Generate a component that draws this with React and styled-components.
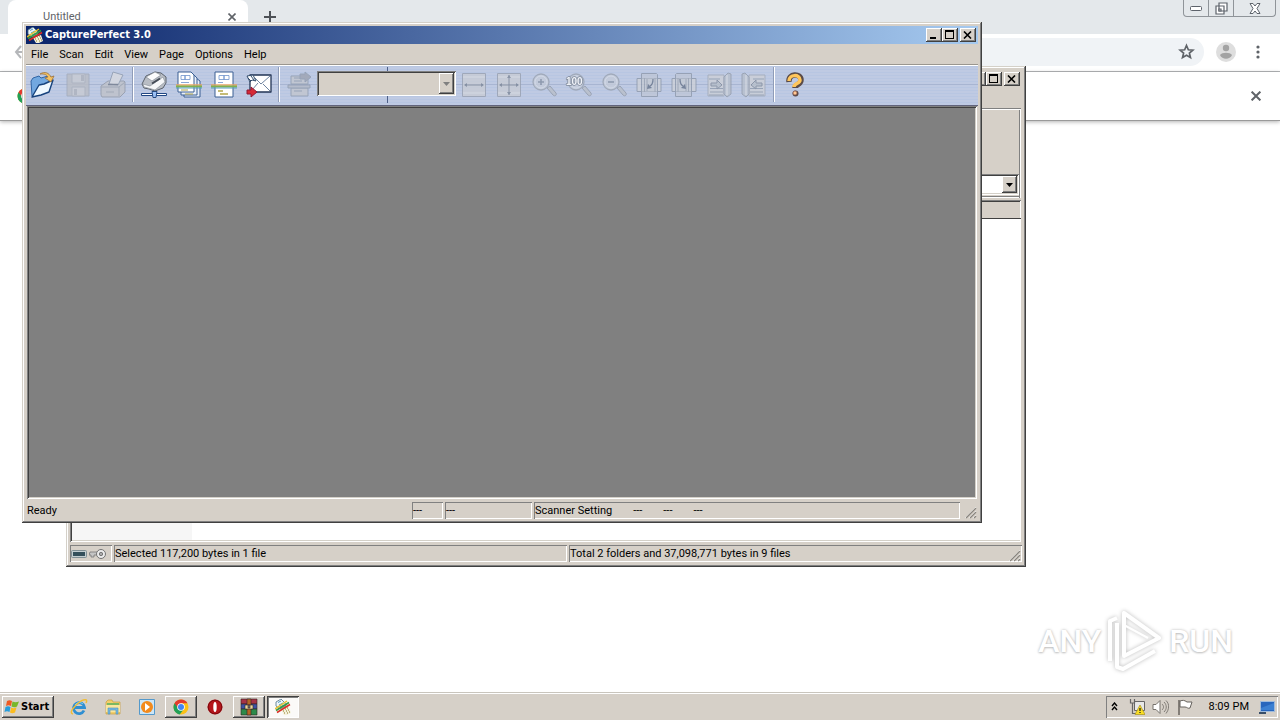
import React from "react";
import styled, { createGlobalStyle, css } from "styled-components";

const FACE = "#d6d0c8";
const uiFont = `Roboto, "DejaVu Sans Condensed", sans-serif`;

const GlobalStyle = createGlobalStyle`
  * { box-sizing: border-box; }
  body { margin: 0; background: #fff; overflow: hidden; font-family: ${uiFont}; font-size: 11px; line-height: 14px; color: #000; }
  button, input, select { font: inherit; color: inherit; margin: 0; padding: 0; border: 0; border-radius: 0; background: none; }
  svg { display: block; flex: none; }
`;

const raised = css`
  background: ${FACE};
  box-shadow: inset -1px -1px #404040, inset 1px 1px #fff, inset -2px -2px #808080;
`;
const sunken = css`
  box-shadow: inset 1px 1px #808080, inset -1px -1px #fff;
`;
const well = css`
  box-shadow: inset 1px 1px #808080, inset -1px -1px #fff, inset 2px 2px #404040, inset -2px -2px #d4d0c8;
`;

const Desktop = styled.div`
  position: relative;
  display: flex;
  flex-direction: column;
  min-height: 100vh;
  overflow: hidden;
`;

/* ---------- browser ---------- */
const Browser = styled.main`
  flex: 1;
  display: flex;
  flex-direction: column;
  background: #fff;
`;
const TabStrip = styled.div`
  display: flex;
  height: 34px;
  padding-left: 8px;
  background: #e4e8eb;
`;
const Tab = styled.div`
  display: flex;
  align-items: center;
  justify-content: space-between;
  width: 240px;
  padding: 0 11px 0 35px;
  background: #fff;
  border-radius: 8px 8px 0 0;
  color: #5f6368;
`;
const PlainButton = styled.button`
  display: flex;
  align-items: center;
  justify-content: center;
  width: ${(p) => p.$w || 24}px;
`;
const NewTab = styled(PlainButton)`
  margin-left: 10px;
`;
const CaptionGroup = styled.div`
  display: flex;
  height: 17px;
  margin: 0 4px 0 auto;
  border: 1px solid #8f9499;
  border-top: 0;
  border-radius: 0 0 4px 4px;
  button + button { border-left: 1px solid #8f9499; }
`;
const AddressRow = styled.div`
  display: flex;
  align-items: center;
  height: 38px;
  padding: 0 2px 2px 13px;
  border-bottom: 1px solid #b4b6b8;
`;
const Omnibox = styled.div`
  flex: 1;
  display: flex;
  align-items: center;
  height: 28px;
  margin: 0 10px 0 70px;
  padding: 0 6px 0 14px;
  border-radius: 14px;
  background: #f0f3f6;
  input { flex: 1; min-width: 0; }
`;
const InfoBar = styled.div`
  display: flex;
  align-items: center;
  justify-content: space-between;
  height: 49px;
  padding: 0 12px 0 17px;
  border-bottom: 1px solid #9a9a9a;
  box-shadow: 0 1px 4px rgba(0, 0, 0, 0.3);
`;

/* ---------- classic windows ---------- */
const Window = styled.section`
  position: absolute;
  left: ${(p) => p.$x}px;
  top: ${(p) => p.$y}px;
  display: flex;
  flex-direction: column;
  width: 960px;
  height: 501px;
  padding: 4px;
  background: ${FACE};
  box-shadow: inset -1px -1px #404040, inset 1px 1px #d4d0c8, inset -2px -2px #808080, inset 2px 2px #fff;
`;
const TitleBar = styled.header`
  display: flex;
  align-items: center;
  height: 18px;
  margin-bottom: 1px;
  padding: 0 2px 0 1px;
  gap: 2px;
  background: ${(p) => (p.$active ? "linear-gradient(90deg, #0a246a, #a6caf0)" : FACE)};
`;
const Title = styled.h1`
  flex: 1;
  margin: 0;
  color: #fff;
  font-family: "DejaVu Sans Condensed", "DejaVu Sans", sans-serif;
  font-size: 11px;
  line-height: 18px;
  font-weight: 700;
`;
const CaptionPair = styled.div`
  display: flex;
`;
const Caption = styled.button`
  display: flex;
  align-items: center;
  justify-content: center;
  width: 16px;
  height: 14px;
  ${raised}
`;
const MenuBar = styled.nav`
  display: flex;
  height: 20px;
  padding-left: 5px;
  gap: 11px;
  border-bottom: 1px solid #9a968f;
`;
const MenuItem = styled.button`
  line-height: 18px;
`;
const ToolBar = styled.div`
  display: flex;
  align-items: center;
  height: 41px;
  padding-bottom: 2px;
  border-top: 1px solid #fff;
  border-bottom: 1px solid #62647c;
  background:
    linear-gradient(#a8b5d2, #a8b5d2) 0 18px / 100% 1px no-repeat,
    repeating-linear-gradient(180deg, #b8c6e2 0 1px, #bfcae3 1px 3px);
`;
const ToolButton = styled.button`
  display: flex;
  align-items: center;
  justify-content: center;
  width: 35px;
  height: 35px;
  &:first-child { width: 34px; }
`;
const ToolSeparator = styled.span`
  width: 2px;
  height: 35px;
  margin: 0 2px;
  background: linear-gradient(90deg, #8f9cb8 50%, #fff 50%);
`;
const ComboSlot = styled.div`
  display: flex;
  align-items: center;
  height: 36px;
  padding-bottom: 2px;
  background: linear-gradient(#4d5f88, #4d5f88) 70px 0 / 1px 100% no-repeat;
`;
const Combo = styled.div`
  display: flex;
  align-items: stretch;
  width: ${(p) => p.$w}px;
  height: ${(p) => p.$h}px;
  padding: 2px;
  background: ${(p) => p.$bg};
  ${well}
  select { flex: 1; min-width: 0; appearance: none; opacity: 1; }
`;
const ComboArrow = styled.span`
  display: flex;
  align-items: center;
  justify-content: center;
  width: 15px;
  ${raised}
`;
const Workspace = styled.div`
  flex: 1;
  margin: 0 1px 1px;
  background: #808080;
  box-shadow: inset 1px 1px #808080, inset -1px -1px #fff, inset 2px 2px #404040, inset -2px -2px #d4d0c8;
`;
const StatusBar = styled.footer`
  display: flex;
  align-items: stretch;
  height: 19px;
  padding: ${(p) => (p.$raise ? "1px 0 1px" : "2px 0 0")};
  gap: 2px;
`;
const StatusPane = styled.div`
  display: flex;
  align-items: center;
  gap: ${(p) => p.$gap || 0}px;
  padding: 1px 2px 0 1px;
  flex: ${(p) => (p.$w ? `0 0 ${p.$w}px` : "1")};
  line-height: 16px;
  ${(p) => !p.$flat && sunken}
`;
const GripSlot = styled.div`
  display: flex;
  align-items: flex-end;
  margin-left: ${(p) => p.$pull || 0}px;
`;
const ArchiveTools = styled.div`
  display: flex;
  align-items: flex-end;
  justify-content: flex-end;
  height: 90px;
  margin: 19px 1px 2px 0;
  padding: 0 2px 3px;
  box-shadow: inset 0 1px #808080, inset 0 2px #fff, inset -1px 0 #fff, inset -2px 0 #808080, inset 0 -1px #fff, inset 0 -2px #808080;
`;
const ListFrame = styled.div`
  flex: 1;
  display: flex;
  flex-direction: column;
  margin: 0 1px 2px 0;
  padding: 2px 0 2px 2px;
  ${well}
`;
const ListHeader = styled.div`
  height: 17px;
  border-bottom: 1px solid #404040;
`;
const ListBody = styled.div`
  flex: 1;
  background: linear-gradient(90deg, #f6f6f6 120px, #fff 120px);
`;

/* ---------- taskbar ---------- */
const TaskBar = styled.footer`
  display: flex;
  align-items: center;
  height: 28px;
  padding: 1px 2px 0;
  background: ${FACE};
  box-shadow: inset 0 1px #c9c5bd, inset 0 2px #fff;
`;
const StartButton = styled.button`
  display: flex;
  align-items: center;
  width: 52px;
  height: 22px;
  padding-left: 2px;
  gap: 1px;
  font-family: "DejaVu Sans Condensed", "DejaVu Sans", sans-serif;
  font-weight: 700;
  ${raised}
`;
const Launchers = styled.div`
  display: flex;
  align-items: center;
  margin-left: 8px;
`;
const Launcher = styled.button`
  display: flex;
  align-items: center;
  justify-content: center;
  width: 34px;
  height: 22px;
`;
const TaskButton = styled(Launcher)`
  width: 32px;
  margin: 0 1px;
  ${raised}
  ${(p) => p.$pressed && css`background: #fbfaf8; box-shadow: inset 1px 1px #404040, inset -1px -1px #fff, inset 2px 2px #808080;`}
`;
const Tray = styled.div`
  display: flex;
  align-items: center;
  height: 22px;
  margin-left: auto;
  padding: 0 2px 0 5px;
  ${sunken}
`;
const TrayButton = styled(PlainButton)`
  height: 20px;
`;
const Clock = styled.time`
  padding: 0 10px 0 6px;
`;

const Watermark = styled.div`
  position: absolute;
  right: 47px;
  bottom: 48px;
  display: flex;
  align-items: center;
  gap: 5px;
  color: #fff;
  font-family: Roboto, sans-serif;
  font-size: 32px;
  font-weight: 500;
  line-height: 62px;
  text-shadow: 0 0 3px #bbb, 0 1px 2px #ccc;
  svg { filter: drop-shadow(0 0 2px #bbb); }
`;

/* ---------- drawings ---------- */
const Cross = ({ s = 8, c = "#5f6368", w = 2 }) => (
  <svg width={s} height={s} viewBox="0 0 8 8" stroke={c} strokeWidth={w} fill="none"><path d="M.5 .5l7 7M7.5 .5l-7 7" /></svg>
);
const MinGlyph = () => <svg width="12" height="10" viewBox="0 0 12 10"><path d="M2 7h6v2H2z" /></svg>;
const MaxGlyph = () => <svg width="10" height="10" viewBox="0 0 10 10" shapeRendering="crispEdges"><path d="M0 0h9v9H0zM1 2v6h7V2z" fillRule="evenodd" /></svg>;
const CloseGlyph = () => <svg width="10" height="8" viewBox="0 0 10 8" fill="none" stroke="#000" strokeWidth="1.6"><path d="M1 .5l7 7M8 .5l-7 7" /></svg>;
const DownGlyph = ({ c = "#000" }) => <svg width="7" height="4" viewBox="0 0 7 4"><path d="M0 0h7L3.500 4z" fill={c} /></svg>;
const Grip = () => (
  <svg width="13" height="13" viewBox="0 0 13 13" fill="none">
    <path d="M0 12L11 1M4 12l7-7M8 12l3-3" stroke="#fff" />
    <path d="M1 12L11 2M5 12l6-6M9 12l2-2" stroke="#8a867f" strokeWidth="1.400" />
  </svg>
);
const AppLogo = ({ s = 16 }) => (
  <svg width={s} height={s} viewBox="0 0 16 16">
    <path d="M1 3l5-3 4 4 1 3-6 3-4-3z" fill="#eef6fa" stroke="#4e7187" strokeWidth=".8" />
    <path d="M3 3.500l3-1.500M4 6l4-2M5 8l4-2" stroke="#4e98c0" />
    <path d="M6 11l8-3 2 6-4 2H9z" fill="#f4f1dc" />
    <path d="M0 10l12-8" stroke="#e9c12c" strokeWidth="1.500" />
    <path d="M1 11.500l13-8" stroke="#389a42" strokeWidth="1.700" />
    <path d="M2 13.500l13-8" stroke="#db2f24" strokeWidth="1.500" />
    <path d="M8 12h1M10 10h1M12 9h1M11 12h1M13 11h1M9 14h1M12 14h1M14 13h1" stroke="#8b7a26" strokeWidth="1.200" />
  </svg>
);
const Tool = ({ children, off }) => (
  <svg width="28" height="28" viewBox="0 0 28 28" fill="none" stroke={off ? "#8e9aad" : "#3a5f93"} strokeWidth="1" strokeLinejoin="round" opacity={off ? 0.8 : 1}>{children}</svg>
);
const OpenIcon = () => (
  <Tool>
    <path d="M3 25L2 10l2-3 6-2 2 2 7-2 3 1v5z" fill="#72a8e0" stroke="#3165a5" />
    <path d="M3 26l7-12 5-1 9-4-4 12-8 3z" fill="#eef8ff" stroke="#16427d" strokeWidth="1.400" />
    <path d="M11 3c5-3 9-1 11 3l3-1-3 6-6-4 3-1c-2-3-4-3-8-3z" fill="#f5c263" stroke="#9a713e" strokeWidth=".8" />
  </Tool>
);
const SaveIcon = () => (
  <Tool off>
    <path d="M3 3h22v22H3z" fill="#babdc5" stroke="#a1a9b8" />
    <path d="M8 3h13v9H8zM8 16h13v9H8z" fill="#c8cbd2" stroke="#a9afba" />
    <path d="M17 4h3v6h-3zM10 18h3v6h-3z" fill="#adb2bc" stroke="none" />
  </Tool>
);
const PrintIcon = () => (
  <Tool off>
    <path d="M2 15l7-5h16l1 1v10l-5 5H3l-1-2z" fill="#bfc2c9" stroke="#9299a7" />
    <path d="M10 13l4-12 10 3-5 10z" fill="#d8dae0" />
    <path d="M2 16h18l6-5M20 16v9M7 21h8" stroke="#9ba2ae" />
    <path d="M9 13.500h10" stroke="#767e8e" strokeWidth="1.500" />
  </Tool>
);
const ScannerIcon = () => (
  <Tool>
    <path d="M2 13l4-8 9-4 6 1 5 4v6l-3 5-8 3-6-2-5-1z" fill="#b9bdc4" stroke="#5b626d" />
    <path d="M6 6l9-5 6 3-9 6z" fill="#fcfcfd" stroke="#848b95" strokeWidth=".7" />
    <path d="M3 13l7 2 13-9 2 5-10 8-7-2-4-1z" fill="#f6f7f9" stroke="#8d939c" strokeWidth=".7" />
    <path d="M12 12.500l8-5" stroke="#454c57" strokeWidth="2" />
    <path d="M1.500 22.500h25v2h-25z" fill="#fff" stroke="#204683" />
    <path d="M12 20.500h5l-1 6h-3z" fill="#9bc0f5" stroke="#244880" />
  </Tool>
);
const Bands = () => <><path d="M1 14h26" stroke="#e9a468" strokeWidth="1.500" /><path d="M1 15.500h26" stroke="#7fb04f" strokeWidth="2" /><path d="M1 17h26" stroke="#57a0c0" /></>;
const PagesIcon = () => (
  <Tool>
    <path d="M9 7h12l4 3v16H9z" fill="#e8effa" />
    <path d="M6 4h13l3 3v17H6z" fill="#e8effa" />
    <path d="M3 1h13l3 3v17H3z" fill="#fff" />
    <path d="M6 4.500h4v4H6zM10 4.500h5v4h-5zM6 11.500h8" stroke="#6d92cb" strokeWidth=".8" />
    <Bands />
    <path d="M6 19h7M10 23h8" stroke="#b3a64b" />
  </Tool>
);
const PageIcon = () => (
  <Tool>
    <path d="M5 1h18v25H5z" fill="#fff" />
    <path d="M9 4.500h5v4H9zM14 4.500h5v4h-5zM8 11.500h5" stroke="#6d92cb" strokeWidth=".8" />
    <Bands />
    <path d="M8 20h5M10 23h8" stroke="#b3a64b" strokeWidth="1.500" />
  </Tool>
);
const MailIcon = () => (
  <Tool>
    <path d="M5 4h21v17H5z" fill="#fff" stroke="#223455" strokeWidth="1.300" />
    <path d="M10 7l6 6 9-8M18 13l7 7M13 12l-6 7" stroke="#6d83a0" />
    <path d="M2 5l6-1 3 6-4-1-2 2z" fill="#fff" stroke="#324c6c" />
    <path d="M3 7l3 3M6 5l3 4" stroke="#324c6c" />
    <path d="M2 19h4v-3l6 5-6 5v-3H2z" fill="#d62936" stroke="#8d1a35" />
  </Tool>
);
const SendIcon = () => (
  <Tool off>
    <path d="M5 5h17v8H5zM5 17h17v8H5z" fill="#c2c6cf" />
    <path d="M2 14h22v3H2z" fill="#b3b9c6" />
    <path d="M8 7h6M8 10h8M8 20h8" />
    <path d="M14 3h5V1l6 5-6 5V8h-5z" fill="#9da3b1" />
  </Tool>
);
const FitWidthIcon = ({ page }) => (
  <Tool off>
    <path d="M2.500 2.500h23v23h-23z" fill="#c8ccd5" stroke="#98a0b0" />
    <path d="M3 6h22M3 22h22" stroke="#dadde3" />
    <path d="M5 14h18" stroke="#7c8698" />
    <path d="M7 12l-3 2 3 2zM21 12l3 2-3 2z" fill="#7c8698" stroke="none" />
    {page && <><path d="M14 4v20" stroke="#7c8698" /><path d="M12 7l2-3 2 3zM12 21l2 3 2-3z" fill="#7c8698" stroke="none" /></>}
  </Tool>
);
const ZoomIcon = ({ mode }) => (
  <Tool off>
    <path d="M17 17l3-2 6 7c1 2-1 4-3 2z" fill="#b9bfca" stroke="#8f98a7" />
    <circle cx="11" cy="11" r="8" fill="#c5ccda" stroke="#9aa3b1" strokeWidth="1.300" />
    <circle cx="11" cy="11" r="6" stroke="#d9dee8" />
    {mode === "100" ? (
      <text x="1" y="14" fontFamily="Liberation Sans, sans-serif" fontSize="10" fontWeight="700" fill="#fff" stroke="#6e7989" strokeWidth="1.500" paintOrder="stroke">100</text>
    ) : (
      <path d={mode === "in" ? "M8 11h6M11 8v6" : "M8 11h6"} strokeWidth="1.600" stroke="#8490a3" />
    )}
  </Tool>
);
const RotateIcon = ({ right }) => (
  <Tool off>
    <g transform={right ? "translate(28 0) scale(-1 1)" : undefined}>
      <path d="M2 7.500h24v13H2z" fill="#cdd1d9" stroke="#8d98aa" />
      <path d="M6.500 2.500h15l1 1v22h-16z" fill="#c0c5cf" fillOpacity=".6" stroke="#8d98aa" />
      <path d="M9.500 7v14M12 8v12M20 7v14" stroke="#98a1b0" />
      <path d="M18 8c0 3-1 6-3 7" stroke="#66748b" strokeWidth="1.300" />
      <path d="M17 17l-5 1 1-5z" fill="#66748b" stroke="none" />
    </g>
  </Tool>
);
const FlipIcon = ({ right }) => (
  <Tool off>
    <g transform={right ? "translate(28 0) scale(-1 1)" : undefined}>
      <path d="M3 4h16v21H3z" fill="#cdd0d7" stroke="#a1a9b7" />
      <path d="M19 6l4-4 3 1v20l-4 3-3-3z" fill="#b7bfcc" stroke="#929baa" />
      <path d="M4 8h11M5 17.500h13M5 21h13M4 24h14" />
      <path d="M6 12h6V9l5 5-5 4v-3H6z" fill="#b8bfca" stroke="#818b9c" />
      <path d="M22 4v20" stroke="#e0e3e8" />
    </g>
  </Tool>
);
const HelpIcon = () => (
  <Tool>
    <path d="M8 11c-1-9 12-9 12-2 0 5-6 4-6 8" stroke="#5a4b49" strokeWidth="5.500" />
    <circle cx="14.500" cy="22.500" r="3" fill="#5a4b49" stroke="none" />
    <path d="M8 10c0-7 11-7 11-1 0 4-6 3-6 7" stroke="#ffc65c" strokeWidth="3.500" />
    <circle cx="14" cy="22" r="2" fill="#ffc894" stroke="#885144" strokeWidth=".6" />
  </Tool>
);
const StarIcon = () => <svg width="17" height="17" viewBox="0 0 24 24" fill="none" stroke="#5f6368" strokeWidth="2.400"><path d="M12 3.500l2.600 6 6.400.6-4.900 4.200 1.500 6.200-5.600-3.300-5.600 3.300 1.500-6.200L3 10.100l6.400-.6z" /></svg>;
const AvatarIcon = () => <svg width="20" height="20" viewBox="0 0 20 20"><circle cx="10" cy="10" r="10" fill="#dedede" /><circle cx="10" cy="6" r="3.200" fill="#a3a3a3" /><path d="M4 13c2-3 10-3 12 0-2 5-10 5-12 0z" fill="#a3a3a3" /></svg>;
const DotsIcon = () => <svg width="4" height="14" viewBox="0 0 4 14" fill="#5f6368"><circle cx="2" cy="2" r="1.600" /><circle cx="2" cy="7" r="1.600" /><circle cx="2" cy="12" r="1.600" /></svg>;
const ChromeIcon = ({ s = 16 }) => (
  <svg width={s} height={s} viewBox="0 0 16 16">
    <circle cx="8" cy="8" r="7.500" fill="#fbc116" />
    <path d="M8 8L1.500 4.200a7.500 7.500 0 0 0 5.200 11.200L11 10z" fill="#22a057" />
    <path d="M1.500 4.200a7.500 7.500 0 0 1 13 0H8L5 9z" fill="#e33b2e" />
    <circle cx="8" cy="8" r="3.800" fill="#fff" /><circle cx="8" cy="8" r="3" fill="#4285f4" />
  </svg>
);
const WindowsIcon = () => (
  <svg width="16" height="16" viewBox="0 0 16 16">
    <path d="M3 2c2-1 3-1 5 0L7 7c-2-1-3-1-5 0z" fill="#ef5a22" /><path d="M8.500 2.500c2 1 4 1 6.500 0l-2 5c-1 1-4 1-5.500 0z" fill="#78b72a" />
    <path d="M1.500 8c2-1 3-1 5 0l-1 5c-2-1-3-1-5 0z" fill="#269ddb" /><path d="M7.200 8.500c1.500 1 3 1 5.300 0l-1.500 5c-2 1-3.500 1-5 0z" fill="#fbbc1f" />
  </svg>
);
const IeIcon = () => (
  <svg width="18" height="18" viewBox="0 0 18 18" fill="none">
    <path d="M14 12.500A5.500 5.500 0 1 1 14.500 9.500H5" stroke="#2f8fd2" strokeWidth="2.800" /><path d="M5 7c2-3 6-3 8-1" stroke="#8ad6f4" />
    <path d="M3 16c-5-1 2-9 8-13 4-2 7-2 5 2" stroke="#f1bd36" strokeWidth="1.500" />
  </svg>
);
const FolderIcon = () => (
  <svg width="16" height="16" viewBox="0 0 16 16"><path d="M1 3l2-2h4l1 2h7v12H1z" fill="#f2ce6b" stroke="#c79d3f" strokeWidth=".7" /><path d="M2 4h12v3H2z" fill="#7bb862" /><path d="M1 6h14v7H1z" fill="#fae69d" /><path d="M3 15V9h10v6h-2v-4H5v4z" fill="#77b9df" stroke="#4b92c2" strokeWidth=".6" /></svg>
);
const MediaIcon = () => (
  <svg width="16" height="16" viewBox="0 0 16 16"><path d="M.500 .500h15v15H.500z" fill="#cce6f7" stroke="#5499cb" /><circle cx="8" cy="8" r="6" fill="#f28a1c" /><path d="M6 4l5 4-5 4z" fill="#fff" /></svg>
);
const OperaIcon = () => (
  <svg width="16" height="16" viewBox="0 0 16 16"><circle cx="8" cy="8" r="7.500" fill="#b5161b" /><circle cx="8" cy="8" r="6.800" fill="none" stroke="#7b0a10" /><ellipse cx="8" cy="8" rx="1.700" ry="5" fill="#fff" /></svg>
);
const RarIcon = () => (
  <svg width="18" height="18" viewBox="0 0 18 18" stroke="#322" strokeWidth=".6"><path d="M1 1h16v5H1z" fill="#a63346" /><path d="M1 6h16v5H1z" fill="#3c53a4" /><path d="M1 11h16v6H1z" fill="#2d8b4a" /><path d="M7 1h4v16H7z" fill="#b56627" /><path d="M5 7h8v4H5z" fill="#ead79b" /><path d="M8 7h2v3H8z" fill="#777" /></svg>
);
const ChevronsIcon = () => <svg width="7" height="9" viewBox="0 0 7 9" fill="none" stroke="#000" strokeWidth="1.400"><path d="M1 4l2.500-3L6 4M1 8l2.500-3L6 8" /></svg>;
const NetIcon = () => (
  <svg width="16" height="16" viewBox="0 0 16 16" fill="none" stroke="#666"><path d="M5.500 2.500h10v9h-10z" fill="#e8e8e8" /><path d="M1.500 0v4h4V0M3.500 4v10.500h4" strokeWidth="1.200" /><path d="M11 6l5 9.500H6z" fill="#fade24" stroke="#a99420" strokeWidth=".7" /><path d="M11 9v3M11 13v1" stroke="#222" strokeWidth="1.300" /></svg>
);
const VolumeIcon = () => (
  <svg width="17" height="16" viewBox="0 0 17 16" fill="none" stroke="#77736d"><path d="M1 5.500h3l4-4v13l-4-4H1z" fill="#fff" /><path d="M10 5c2 2 2 4 0 6M12 3c3 3 3 7 0 10M14 1.500c4 4 3 9 0 13" strokeWidth=".9" /></svg>
);
const FlagIcon = () => <svg width="16" height="16" viewBox="0 0 16 16" stroke="#67635e"><path d="M2 1v15" strokeWidth="1.500" /><path d="M3 2c3-1 4-1 7 1h5l-2 6c-2 1-3-1-5-1H3z" fill="#fff" /></svg>;
const ScreenIcon = () => <svg width="17" height="14" viewBox="0 0 17 14"><path d="M1.500 1.500h14v10h-14z" fill="#2866bd" stroke="#9fbbdc" /><path d="M2 8l13-5v7H2z" fill="#3c80d2" /><path d="M0 12h7v2H0z" fill="#394e68" /></svg>;
const DriveIcon = () => <svg width="16" height="10" viewBox="0 0 16 10"><rect x=".5" y="1.500" width="15" height="7" rx="1" fill="#c3cdd0" stroke="#819095" /><path d="M2 3h12v4H2z" fill="#344f5a" /></svg>;
const KeyIcon = () => <svg width="17" height="12" viewBox="0 0 17 12"><path d="M1 4h8v3H5v2H2V7H0z" fill="#c5c5c5" stroke="#777" strokeWidth=".8" /><circle cx="12" cy="6" r="4.500" fill="#ececec" stroke="#737373" /><circle cx="12" cy="6" r="1.700" fill="#aaa" stroke="#777" /></svg>;
const RunLogo = () => (
  <svg width="58" height="62" viewBox="0 0 58 62" fill="none" stroke="#fff" strokeWidth="4" strokeLinejoin="round">
    <path d="M18 3v43l35-18z" /><path d="M11 8L4 11v40" /><path d="M11 13v44l6 2 32-18" /><path d="M18 46V15l24 13" strokeWidth="2" />
  </svg>
);

const tools = [
  ["Open", <OpenIcon />], ["Save", <SaveIcon />, true], ["Print", <PrintIcon />, true], null,
  ["Scanner setup", <ScannerIcon />], ["Scan batch", <PagesIcon />], ["Scan page", <PageIcon />], ["Scan to mail", <MailIcon />], null,
  ["Scan job", <SendIcon />, true],
];
const viewTools = [
  ["Fit to width", <FitWidthIcon />, true], ["Fit to window", <FitWidthIcon page />, true], ["Zoom in", <ZoomIcon mode="in" />, true],
  ["Actual size", <ZoomIcon mode="100" />, true], ["Zoom out", <ZoomIcon mode="out" />, true], ["Rotate left", <RotateIcon />, true],
  ["Rotate right", <RotateIcon right />, true], ["Next page", <FlipIcon />, true], ["Previous page", <FlipIcon right />, true], null,
  ["Help", <HelpIcon />],
];
const ToolSet = ({ items }) => items.map((t, i) =>
  t ? <ToolButton key={i} aria-label={t[0]} disabled={t[2]}>{t[1]}</ToolButton> : <ToolSeparator key={i} />
);
const Captions = () => (
  <>
    <CaptionPair>
      <Caption aria-label="Minimize"><MinGlyph /></Caption>
      <Caption aria-label="Maximize"><MaxGlyph /></Caption>
    </CaptionPair>
    <Caption aria-label="Close"><CloseGlyph /></Caption>
  </>
);

const BrowserWindow = () => (
  <Browser>
    <TabStrip>
      <Tab>Untitled<PlainButton $w={10} aria-label="Close tab"><Cross w={1.6} /></PlainButton></Tab>
      <NewTab aria-label="New tab"><svg width="12" height="12" viewBox="0 0 12 12" stroke="#4d5156" strokeWidth="2"><path d="M6 0v12M0 6h12" /></svg></NewTab>
      <CaptionGroup>
        <PlainButton aria-label="Minimize browser"><svg width="12" height="5" viewBox="0 0 12 5"><rect x=".5" y=".5" width="11" height="4" rx="1" fill="#fff" stroke="#5d636b" /></svg></PlainButton>
        <PlainButton $w={25} aria-label="Restore browser"><svg width="13" height="13" viewBox="0 0 13 13" fill="#fff" stroke="#5d636b" strokeWidth="1.200"><path d="M4 1h8v8H4zM1 4h8v8H1z" /><path d="M4 7h2v2H4z" /></svg></PlainButton>
        <PlainButton $w={42} aria-label="Close browser"><svg width="12" height="11" viewBox="0 0 12 11" fill="#fff" stroke="#5d636b"><path d="M1 .5h3l2 2.500 2-2.500h3L8 5.500l3 5H8L6 8l-2 2.500H1l3-5z" /></svg></PlainButton>
      </CaptionGroup>
    </TabStrip>
    <AddressRow>
      <PlainButton $w={16} aria-label="Back"><svg width="14" height="14" viewBox="0 0 14 14" fill="none" stroke="#b5b7ba" strokeWidth="2"><path d="M7 1L2 7l5 6M2 7h12" /></svg></PlainButton>
      <Omnibox><input aria-label="Address" /><PlainButton aria-label="Bookmark"><StarIcon /></PlainButton></Omnibox>
      <PlainButton aria-label="Profile"><AvatarIcon /></PlainButton>
      <PlainButton $w={40} aria-label="Menu"><DotsIcon /></PlainButton>
    </AddressRow>
    <InfoBar><ChromeIcon /><PlainButton aria-label="Dismiss"><Cross s={10} w={1.600} /></PlainButton></InfoBar>
  </Browser>
);

const ArchiveWindow = () => (
  <Window $x={66} $y={66}>
    <TitleBar><Title as="span" /><Captions /></TitleBar>
    <ArchiveTools>
      <Combo $w={880} $h={21} $bg="#fff"><select aria-label="Path" /><ComboArrow><DownGlyph /></ComboArrow></Combo>
    </ArchiveTools>
    <ListFrame><ListHeader /><ListBody /></ListFrame>
    <StatusBar $raise>
      <StatusPane $w={42} $gap={2}><DriveIcon /><KeyIcon /></StatusPane>
      <StatusPane $w={453}>Selected 117,200 bytes in 1 file</StatusPane>
      <StatusPane>Total 2 folders and 37,098,771 bytes in 9 files</StatusPane>
      <GripSlot $pull={-15}><Grip /></GripSlot>
    </StatusBar>
  </Window>
);

const CaptureWindow = () => (
  <Window $x={22} $y={22}>
    <TitleBar $active><AppLogo /><Title>CapturePerfect 3.0</Title><Captions /></TitleBar>
    <MenuBar>{["File", "Scan", "Edit", "View", "Page", "Options", "Help"].map((m) => <MenuItem key={m}>{m}</MenuItem>)}</MenuBar>
    <ToolBar>
      <ToolSet items={tools} />
      <ComboSlot><Combo $w={139} $h={25} $bg={FACE}><select disabled aria-label="Scan job list" /><ComboArrow><DownGlyph c="#808080" /></ComboArrow></Combo></ComboSlot>
      <ToolSet items={viewTools} />
    </ToolBar>
    <Workspace />
    <StatusBar>
      <StatusPane $flat>Ready</StatusPane>
      <StatusPane $w={31}>---</StatusPane>
      <StatusPane $w={87}>---</StatusPane>
      <StatusPane $w={426} $gap={21}><span>Scanner Setting</span><span>---</span><span>---</span><span>---</span></StatusPane>
      <GripSlot $pull={3}><Grip /></GripSlot>
    </StatusBar>
  </Window>
);

export default function App() {
  return (
    <>
      <GlobalStyle />
      <Desktop>
        <BrowserWindow />
        <ArchiveWindow />
        <CaptureWindow />
        <Watermark><span>ANY</span><RunLogo /><span>RUN</span></Watermark>
        <TaskBar>
          <StartButton><WindowsIcon />Start</StartButton>
          <Launchers>
            <Launcher aria-label="Internet Explorer"><IeIcon /></Launcher>
            <Launcher aria-label="Explorer"><FolderIcon /></Launcher>
            <Launcher aria-label="Media Player"><MediaIcon /></Launcher>
            <TaskButton aria-label="Chrome"><ChromeIcon /></TaskButton>
            <Launcher aria-label="Opera"><OperaIcon /></Launcher>
            <TaskButton aria-label="WinRAR"><RarIcon /></TaskButton>
            <TaskButton $pressed aria-label="CapturePerfect"><AppLogo /></TaskButton>
          </Launchers>
          <Tray>
            <TrayButton $w={8} aria-label="Show hidden icons"><ChevronsIcon /></TrayButton>
            <TrayButton $w={36} aria-label="Network"><NetIcon /></TrayButton>
            <TrayButton $w={12} aria-label="Volume"><VolumeIcon /></TrayButton>
            <TrayButton $w={36} aria-label="Action Center"><FlagIcon /></TrayButton>
            <Clock>8:09 PM</Clock>
            <TrayButton $w={17} aria-label="Show desktop"><ScreenIcon /></TrayButton>
          </Tray>
        </TaskBar>
      </Desktop>
    </>
  );
}
